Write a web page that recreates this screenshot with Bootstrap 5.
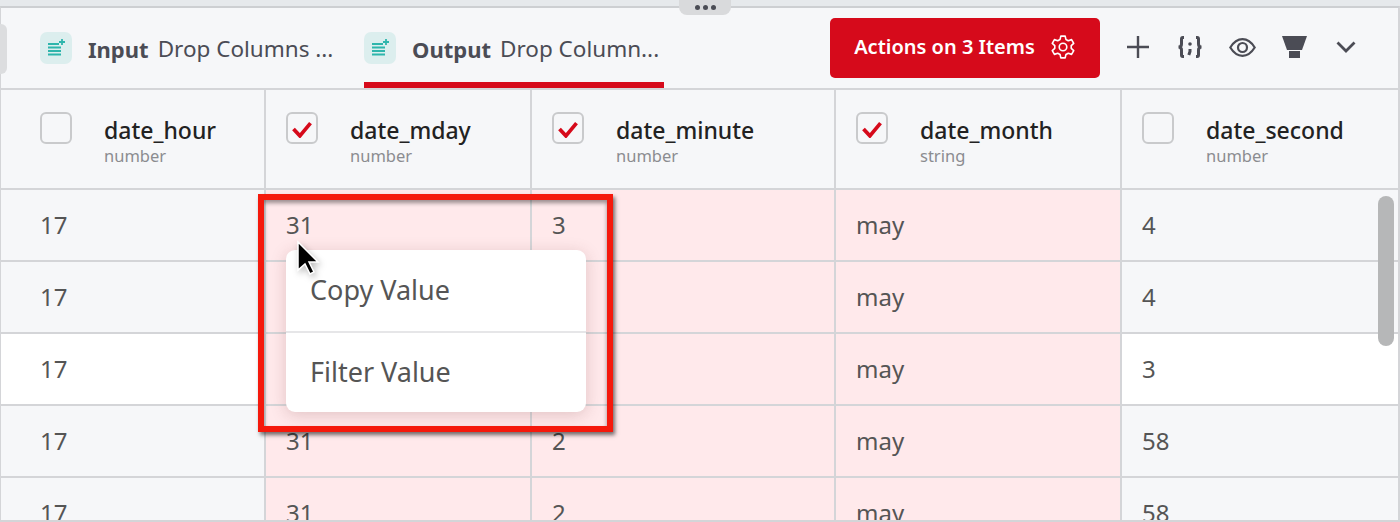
<!DOCTYPE html>
<html lang="en">
<head>
<meta charset="utf-8">
<title>Output table</title>
<link href="https://cdn.jsdelivr.net/npm/bootstrap@5.3.0/dist/css/bootstrap.min.css" rel="stylesheet">
<style>
html,body{margin:0;background:#fff}
body{font-family:"Noto Sans","Liberation Sans",sans-serif;color:#555}
.stage{position:relative;width:1400px;height:522px;overflow:hidden;background:#e6e9ec;padding-top:6px}
.panel{height:516px;background:#f6f7f9;border-top:2px solid #cdcfd2;border-left:1px solid #d4d5d8;border-right:2px solid #d4d5d8;border-bottom:2px solid #d4d5d8;overflow:hidden}
.grip{position:absolute;left:679px;top:0;width:52px;height:15px;background:#d9dadc;border-radius:0 0 8px 8px;gap:3px}
.grip i{width:5px;height:5px;border-radius:50%;background:#4b4c55;display:block}
.lefttab{position:absolute;left:0;top:24px;width:7px;height:50px;background:#dcdddf;border-radius:0 6px 6px 0}
.topbar{height:82px;border-bottom:2px solid #d4d5d8;padding-left:39px}
.tabx{height:80px;color:#4b4c55;white-space:nowrap;border-bottom:6px solid transparent;padding-top:6px}
.tabx b{font-weight:700;margin-right:9px;font-size:22px;padding-top:2px}
.tabx span.nm{font-size:22.500px;padding-top:2px}
.tab-a{width:324px}
.tab-b{width:300px;border-bottom-color:#d60a1b}
.tile{width:32px;height:32px;border-radius:7px;background:#dceeee;flex:none;margin-right:16px}
.act{width:270px;height:60px;background:#d60a1b;color:#fff;border:0;border-radius:5px;font-size:20px;font-weight:600;margin-left:166px;margin-top:10px;gap:15px;padding:0 0 2px;white-space:nowrap}
.act:hover{background:#d60a1b;color:#fff}
.toolrow{height:78px}
.tool{color:#4b4c55;flex:none}
.t1{margin-left:27px}.t2{margin-left:28px}.t3{margin-left:26px}.t4{margin-left:26px}.t5{margin-left:29px}
.sheet{table-layout:fixed;width:1397px;margin:0;border-collapse:collapse}
.sheet th,.sheet td{border:0;border-right:2px solid #d4d5d8;border-bottom:2px solid #d4d5d8;padding:0;background:#f6f7f9;box-shadow:none;color:#555}
.sheet th:last-child,.sheet td:last-child{border-right:0}
.sheet th{height:99px;padding-left:39px;padding-top:4px;vertical-align:middle;font-weight:400}
.sheet th.after{padding-left:20px}
.sheet td{height:72px;font-size:24px;padding-left:20px;vertical-align:middle}
.sheet td:first-child{padding-left:39px}
.sheet td.pick{background:#ffe9eb}
.sheet tr.lit td:not(.pick){background:#fff}
.box{width:32px;height:32px;border:2px solid #c9cacc;border-radius:6px;background:#f6f7f9;flex:none;margin-right:32px;margin-top:-27px}
.box svg{margin-top:3px}
.nm1{font-size:23px;font-weight:500;color:#222;line-height:26px;display:block}
.nm2{font-size:16.500px;color:#8b8c90;line-height:20px;display:block;margin-top:3px}
.sbar{position:absolute;left:1378px;top:196px;width:16px;height:150px;background:#b6b7b8;border-radius:8px}
.ctx{position:absolute;left:286px;top:250px;width:300px;height:162px;background:#fff;border-radius:9px;box-shadow:0 3px 16px rgba(120,60,60,.22);font-size:27px;color:#555}
.ctx div{height:81px;padding-left:24px}
.ctx div+div{border-top:2px solid #e6e6e8}
.mark-red{position:absolute;left:258px;top:194px;width:355px;height:238px;border:6px solid #f5190c;box-shadow:2px 3px 4px rgba(0,0,0,.55),inset 0 3px 4px rgba(0,0,0,.4)}
.cursor{position:absolute;left:296px;top:240px;filter:drop-shadow(2px 3px 3px rgba(0,0,0,.25))}
</style>
</head>
<body>
<div class="stage">
  <div class="panel">
    <div class="topbar d-flex align-items-start">
      <div class="tabx tab-a d-flex align-items-center">
        <span class="tile d-flex align-items-center justify-content-center"><svg width="20" height="20" viewBox="0 0 20 20"><path d="M2 6h11M2 9.500h13M2 13h13M2 16.500h13" stroke="#2fb5ac" stroke-width="1.800" fill="none"/><path d="M16 1v6M13 4h6" stroke="#2fb5ac" stroke-width="1.800" fill="none"/></svg></span>
        <b>Input</b><span class="nm">Drop Columns ...</span>
      </div>
      <div class="tabx tab-b d-flex align-items-center">
        <span class="tile d-flex align-items-center justify-content-center"><svg width="20" height="20" viewBox="0 0 20 20"><path d="M2 6h11M2 9.500h13M2 13h13M2 16.500h13" stroke="#2fb5ac" stroke-width="1.800" fill="none"/><path d="M16 1v6M13 4h6" stroke="#2fb5ac" stroke-width="1.800" fill="none"/></svg></span>
        <b>Output</b><span class="nm">Drop Column...</span>
      </div>
      <button class="act btn d-flex align-items-center justify-content-center" type="button">Actions on 3 Items
        <svg width="26" height="26" viewBox="0 0 24 24" fill="none" stroke="#fff" stroke-width="1.500" stroke-linejoin="round"><circle cx="12" cy="12" r="3.500"/><path d="M10 2h4l.7 3 2.200 1.200 3-1 2 3.500-2.300 2.100v2.400l2.300 2.100-2 3.500-3-1L14.700 19l-.7 3h-4l-.7-3-2.200-1.200-3 1-2-3.500 2.300-2.100v-2.400L2.100 8.700l2-3.500 3 1L9.300 5z"/></svg>
      </button>
      <div class="toolrow d-flex align-items-center">
        <svg class="tool t1" width="22" height="22" viewBox="0 0 22 22"><path d="M11 0v22M0 11h22" stroke="currentColor" stroke-width="2.400"/></svg>
        <svg class="tool t2" width="26" height="22" viewBox="0 0 26 22" fill="none" stroke="currentColor" stroke-width="3"><path d="M7 1.500H5.800Q4.500 1.500 4.500 3v5q0 3-3 3 3 0 3 3v5q0 1.500 1.300 1.500H7M19 1.500h1.200q1.300 0 1.300 1.500v5q0 3 3 3-3 0-3 3v5q0 1.500-1.300 1.500H19"/><circle cx="13" cy="8" r="1.800" fill="currentColor" stroke="none"/><path d="M13 13v2.500L11.800 19" stroke-width="3"/></svg>
        <svg class="tool t3" width="27" height="19" viewBox="0 0 27 19" fill="none" stroke="currentColor" stroke-width="2.200"><path d="M1.300 9.500C5 3.500 9 1.200 13.500 1.200S22 3.500 25.700 9.500C22 15.500 18 17.800 13.500 17.800S5 15.500 1.300 9.500z"/><circle cx="13.500" cy="9.500" r="4.500"/></svg>
        <svg class="tool t4" width="25" height="22" viewBox="0 0 25 22"><path d="M0 0h25l-5 14H5z" fill="currentColor"/><rect x="7" y="15" width="11" height="7" fill="currentColor"/></svg>
        <svg class="tool t5" width="20" height="12" viewBox="0 0 20 12"><path d="M1.500 1.500 10 10l8.500-8.500" fill="none" stroke="currentColor" stroke-width="2.800"/></svg>
      </div>
    </div>
    <table class="table sheet">
      <colgroup><col style="width:264px"><col style="width:266px"><col style="width:304px"><col style="width:286px"><col></colgroup>
      <thead>
        <tr>
          <th><div class="d-flex align-items-center"><span class="box"></span><span><span class="nm1">date_hour</span><span class="nm2">number</span></span></div></th>
          <th class="after"><div class="d-flex align-items-center"><span class="box d-flex align-items-center justify-content-center"><svg width="22" height="17" viewBox="0 0 20 16"><path d="M2 7.500 8 14 18 2" fill="none" stroke="#d60a1b" stroke-width="3.500"/></svg></span><span><span class="nm1">date_mday</span><span class="nm2">number</span></span></div></th>
          <th class="after"><div class="d-flex align-items-center"><span class="box d-flex align-items-center justify-content-center"><svg width="22" height="17" viewBox="0 0 20 16"><path d="M2 7.500 8 14 18 2" fill="none" stroke="#d60a1b" stroke-width="3.500"/></svg></span><span><span class="nm1">date_minute</span><span class="nm2">number</span></span></div></th>
          <th class="after"><div class="d-flex align-items-center"><span class="box d-flex align-items-center justify-content-center"><svg width="22" height="17" viewBox="0 0 20 16"><path d="M2 7.500 8 14 18 2" fill="none" stroke="#d60a1b" stroke-width="3.500"/></svg></span><span><span class="nm1">date_month</span><span class="nm2">string</span></span></div></th>
          <th class="after"><div class="d-flex align-items-center"><span class="box"></span><span><span class="nm1">date_second</span><span class="nm2">number</span></span></div></th>
        </tr>
      </thead>
      <tbody>
        <tr><td>17</td><td class="pick">31</td><td class="pick">3</td><td class="pick">may</td><td>4</td></tr>
        <tr><td>17</td><td class="pick">31</td><td class="pick">3</td><td class="pick">may</td><td>4</td></tr>
        <tr class="lit"><td>17</td><td class="pick">31</td><td class="pick">3</td><td class="pick">may</td><td>3</td></tr>
        <tr><td>17</td><td class="pick">31</td><td class="pick">2</td><td class="pick">may</td><td>58</td></tr>
        <tr><td>17</td><td class="pick">31</td><td class="pick">2</td><td class="pick">may</td><td>58</td></tr>
      </tbody>
    </table>
  </div>
  <span class="grip d-flex align-items-center justify-content-center"><i></i><i></i><i></i></span>
  <span class="lefttab"></span>
  <div class="sbar"></div>
  <div class="ctx"><div class="d-flex align-items-center">Copy Value</div><div class="d-flex align-items-center">Filter Value</div></div>
  <div class="mark-red"></div>
  <svg class="cursor" width="26" height="38" viewBox="0 0 26 38"><path d="M2 2v28l7-6 5 10 4-2-5-10h9z" fill="#000" stroke="#fff" stroke-width="1.500"/></svg>
</div>
<script src="https://cdn.jsdelivr.net/npm/bootstrap@5.3.0/dist/js/bootstrap.bundle.min.js"></script>
</body>
</html>
